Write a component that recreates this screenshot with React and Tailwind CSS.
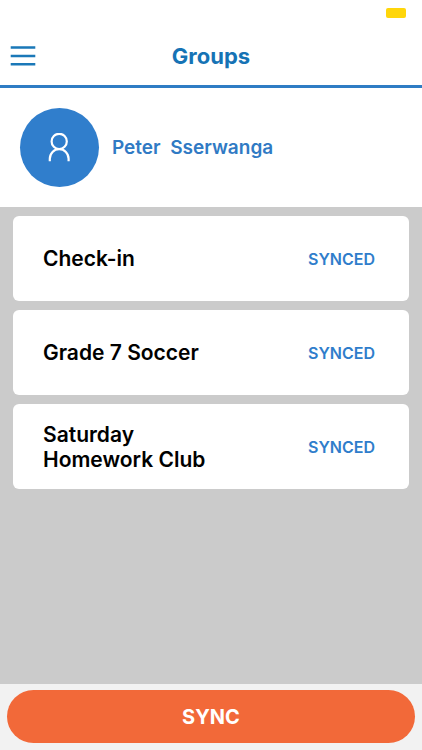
import React from "react";

const groups = [
  { id: 1, name: "Check-in", status: "SYNCED" },
  { id: 2, name: "Grade 7 Soccer", status: "SYNCED" },
  { id: 3, name: "Saturday Homework Club", status: "SYNCED" },
];

const MenuIcon = () => (
  <svg width="26" height="20" viewBox="0 0 26 20" fill="none" aria-hidden="true">
    <path
      d="M0.7 1.6H25.3M0.7 9.9H25.3M0.7 18.3H25.3"
      stroke="#1a78b8"
      strokeWidth="2.5"
    />
  </svg>
);

const PersonIcon = () => (
  <svg width="24" height="30" viewBox="0 0 24 30" fill="none" aria-hidden="true">
    <g stroke="#fff" strokeWidth="2.2">
      <circle cx="11.2" cy="8.4" r="7.6" />
      <path d="M1.8 28.2V25.8C1.8 20.4 6 16.2 11.2 16.2S20.6 20.4 20.6 25.8V28.2" />
    </g>
  </svg>
);

const GroupCard = ({ name, status }) => (
  <li className="flex min-h-[85px] items-center justify-between rounded-md bg-white pr-[34px] pl-[30px]">
    <h2 className="w-[180px] text-[21px] leading-[25px] font-semibold text-black">
      {name}
    </h2>
    <span className="text-base font-semibold text-[#2f7dcb]">{status}</span>
  </li>
);

const App = () => {
  return (
    <div className="flex min-h-screen flex-col bg-white font-['Inter',sans-serif]">
      {/* Status bar */}
      <div className="flex h-7 items-start justify-end px-4 pt-2">
        <span className="h-[10px] w-5 rounded-xs bg-[#ffd60a]" />
      </div>

      {/* Header */}
      <header className="grid h-[60px] grid-cols-[1fr_auto_1fr] items-center border-b-3 border-[#2f7cc4] px-[10px] pb-[2px]">
        <button type="button" aria-label="Menu" className="justify-self-start">
          <MenuIcon />
        </button>
        <h1 className="text-[22px] leading-7 font-bold text-[#1673b5]">
          Groups
        </h1>
      </header>

      {/* Profile */}
      <section className="flex items-center gap-[13px] p-5">
        <div className="flex size-[79px] items-center justify-center rounded-full bg-[#307ecc]">
          <PersonIcon />
        </div>
        <p className="text-[19px] leading-7 font-semibold whitespace-pre text-[#307ac4]">
          {"Peter  Sserwanga"}
        </p>
      </section>

      {/* Groups */}
      <main className="flex-1 bg-[#cbcbcb] px-[13px] py-[9px]">
        <ul className="flex flex-col gap-[9px]">
          {groups.map((group) => (
            <GroupCard key={group.id} name={group.name} status={group.status} />
          ))}
        </ul>
      </main>

      {/* Footer */}
      <footer className="bg-[#f2f2f2] px-[7px] pt-[6px] pb-[7px]">
        <button
          type="button"
          className="h-[53px] w-full rounded-full bg-[#f26939] text-xl font-bold text-white"
        >
          SYNC
        </button>
      </footer>
    </div>
  );
};

export default App;
